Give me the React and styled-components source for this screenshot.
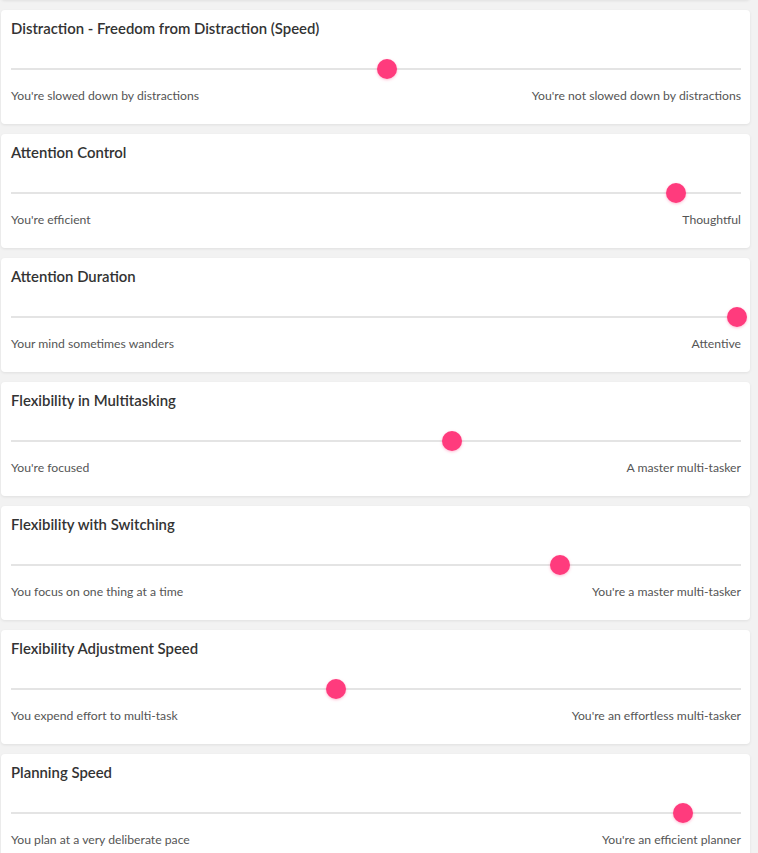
import React from "react";
import styled, { createGlobalStyle } from "styled-components";

const GlobalStyle = createGlobalStyle`
  html, body {
    margin: 0;
    padding: 0;
    background: #f2f2f2;
    font-family: 'Lato', 'Open Sans', sans-serif;
  }
`;

const List = styled.div`
  display: flex;
  flex-direction: column;
  gap: 10px;
  width: 749px;
  margin-left: 1px;
  margin-top: -113px;
`;

const Card = styled.div`
  background: #fff;
  border-radius: 4px;
  box-shadow: 0 1px 3px rgba(0, 0, 0, 0.08);
  height: 113px;
  box-sizing: border-box;
  padding: 9px 9px 0 10px;
  display: flex;
  flex-direction: column;
  & + & {
    height: 114px;
  }
`;

const Title = styled.h3`
  margin: 0;
  font-size: 14.9px;
  font-weight: 600;
  color: #333;
  line-height: 18px;
  height: 18px;
`;

const Track = styled.div`
  position: relative;
  margin-top: 31px;
  height: 2px;
  background: #e4e4e4;
`;

const Thumb = styled.span`
  position: absolute;
  top: -9px;
  width: 20px;
  height: 20px;
  margin-left: -10px;
  border-radius: 50%;
  background: #ff3b7d;
  box-shadow: 0 1px 3px rgba(255, 59, 125, 0.35);
`;

const Labels = styled.div`
  display: flex;
  justify-content: space-between;
  margin-top: 18px;
  font-size: 12.2px;
  color: #555;
  line-height: 16px;
`;

const traits = [
  { title: "Distraction - Freedom from Distraction (Speed)", left: "You're slowed down by distractions", right: "You're not slowed down by distractions", at: 387 },
  { title: "Attention Control", left: "You're efficient", right: "Thoughtful", at: 676 },
  { title: "Attention Duration", left: "Your mind sometimes wanders", right: "Attentive", at: 737 },
  { title: "Flexibility in Multitasking", left: "You're focused", right: "A master multi-tasker", at: 452 },
  { title: "Flexibility with Switching", left: "You focus on one thing at a time", right: "You're a master multi-tasker", at: 560 },
  { title: "Flexibility Adjustment Speed", left: "You expend effort to multi-task", right: "You're an effortless multi-tasker", at: 336 },
  { title: "Planning Speed", left: "You plan at a very deliberate pace", right: "You're an efficient planner", at: 683 },
];

function TraitCard({ title, left, right, at }) {
  return (
    <Card>
      <Title>{title}</Title>
      <Track>
        <Thumb style={{ left: at - 11 }} />
      </Track>
      <Labels>
        <span>{left}</span>
        <span>{right}</span>
      </Labels>
    </Card>
  );
}

export default function App() {
  return (
    <>
      <GlobalStyle />
      <List>
        <Card />
        {traits.map((t) => (
          <TraitCard key={t.title} {...t} />
        ))}
      </List>
    </>
  );
}
